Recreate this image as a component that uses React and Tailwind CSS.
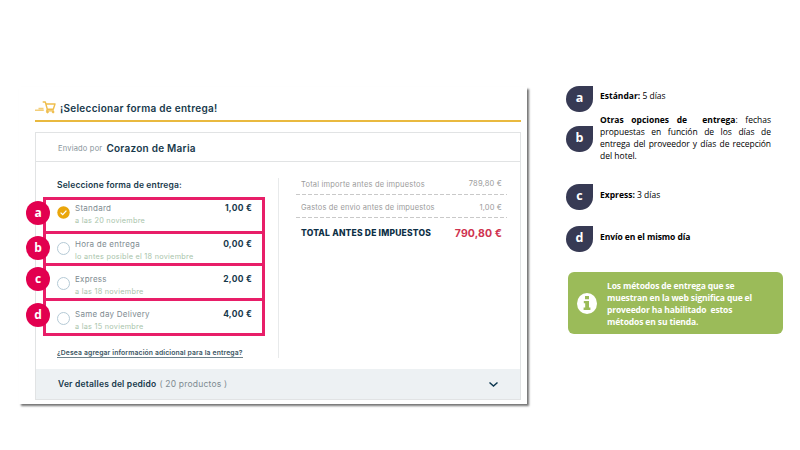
import React from 'react';

const options = [
  { id: 'a', name: 'Standard', date: 'a las 20 noviembre', price: '1,00 €', checked: true, box: 'h-[37px]', pad: 'pt-[4px]', badge: 'top-[1px]' },
  { id: 'b', name: 'Hora de entrega', date: 'lo antes posible el 18 noviembre', price: '0,00 €', box: 'h-[35px]', pad: 'pt-[6px]', badge: 'top-[2px]' },
  { id: 'c', name: 'Express', date: 'a las 18 noviembre', price: '2,00 €', box: 'h-[38px]', pad: 'pt-[9px]', badge: 'top-[1px]' },
  { id: 'd', name: 'Same day Delivery', date: 'a las 15 noviembre', price: '4,00 €', box: 'h-[38px]', pad: 'pt-[9px]', badge: 'top-[2px]' },
];

const CartIcon = () => (
  <svg width="22" height="13" viewBox="0 0 22 13" fill="none" stroke="#efbd4b">
    <path d="M3.5 7.6H8.5M0 9.3H8.8" strokeWidth="1.5" opacity=".75" />
    <path d="M8.2 1H10.3L12.3 8.2H18.3L20 3H11" strokeWidth="1.4" strokeLinejoin="round" strokeLinecap="round" />
    <path d="M12.3 8.2L11.6 9.9H18.8" strokeWidth="1.1" />
    <circle cx="12.5" cy="11" r=".9" fill="#efbd4b" />
    <circle cx="18.1" cy="11" r=".9" fill="#efbd4b" />
  </svg>
);

const Radio = ({ checked }) =>
  checked ? (
    <svg width="13" height="13" viewBox="0 0 13 13" className="shrink-0">
      <circle cx="6.5" cy="6.5" r="6.2" fill="#eaa60b" />
      <path d="M3.6 6.6L5.7 8.6L9.4 4.6" fill="none" stroke="#fff" strokeWidth="1.3" />
    </svg>
  ) : (
    <span className="w-[13px] h-[13px] shrink-0 rounded-full border border-[#b5cad6]" />
  );

const Option = ({ option }) => (
  <div className={`relative -mb-[3px] border-3 border-[#e81e68] ${option.box}`}>
    <span className={`absolute -left-[20px] z-10 w-6 h-6 rounded-full bg-[#e2004f] flex items-center justify-center pb-px font-['Open_Sans'] font-bold text-[12px] leading-none text-white ${option.badge}`}>
      {option.id}
    </span>
    <div className={`flex pl-[11px] pr-[10px] ${option.pad}`}>
      <div className="pt-[2px] flex items-start">
        <Radio checked={option.checked} />
      </div>
      <div className="ml-[5px] flex-1 whitespace-nowrap">
        <div className="text-[8px] leading-[9px] tracking-[0.25px] text-[#7e8b91]">{option.name}</div>
        <div className="mt-[3px] text-[7.3px] leading-[10px] tracking-[0.26px] text-[#a9c4ab]">{option.date}</div>
      </div>
      <div className="text-[8.5px] leading-[9px] font-bold text-[#17394b] tracking-[0.25px]">{option.price}</div>
    </div>
  </div>
);

const Drop = ({ children }) => (
  <span className="w-[27px] h-[26px] shrink-0 rounded-full rounded-tr-none bg-[#373a54] flex items-center justify-center pb-px font-['Open_Sans'] font-bold text-[12.5px] leading-none text-white">
    {children}
  </span>
);

const dashes = 'h-px bg-[repeating-linear-gradient(90deg,#c9c9c9_0_4px,transparent_4px_6px)]';

const DeliveryCard = () => (
  <div className="ml-[19px] mt-[87px] w-[508px] h-[317px] shrink-0 pl-4 pr-[6px] bg-white shadow-[2px_2px_2px_rgba(0,0,0,0.55)] font-['Inter',sans-serif]">
    <div className="h-[35px] border-b-2 border-[#e9b93f] flex items-start pt-[14px]">
      <CartIcon />
      <h1 className="ml-[3px] text-[10px] leading-[14px] tracking-[0.28px] font-semibold text-[#17394b] whitespace-nowrap">¡Seleccionar forma de entrega!</h1>
    </div>

    <div className="mt-[10px] h-[268px] border border-[#e1e3e4] flex flex-col">
      <div className="h-[29px] shrink-0 border-b border-[#e1e3e4] flex items-center pl-[22px] pt-[2px] whitespace-nowrap">
        <span className="pt-[2px] text-[7.5px] text-[#87949a] tracking-[0.2px]">Enviado por</span>
        <span className="ml-[4px] text-[10px] tracking-[0.25px] font-semibold text-[#17394b]">Corazon de Maria</span>
      </div>

      <div className="flex-1 min-h-0 flex">
        <div className="w-[229px] pl-[7px] pt-[17px]">
          <h2 className="pl-[14px] text-[8.5px] leading-[12px] tracking-[0.15px] font-semibold text-[#17394b] whitespace-nowrap">Seleccione forma de entrega:</h2>
          <div className="mt-[6px] w-[222px]">
            {options.map((option) => (
              <Option key={option.id} option={option} />
            ))}
          </div>
          <div className="mt-[15px] pl-[14px] flex">
            <a className="border-b border-[#6d828c] text-[6.8px] leading-[9px] tracking-[0.13px] font-semibold text-[#3b5563] whitespace-nowrap">¿Desea agregar información adicional para la entrega?</a>
          </div>
        </div>

        <div className="ml-[13px] mt-[16px] h-[180px] w-px bg-[#e8eaeb]" />

        <div className="ml-[17px] mt-[14px] w-[211px] whitespace-nowrap">
          <div className="h-[18px] px-[5px] flex items-center justify-between text-[7.5px] tracking-[0.19px] text-[#9b9b9b]">
            <span>Total importe antes de impuestos</span>
            <span className="pb-[2px]">789,80 €</span>
          </div>
          <div className={dashes} />
          <div className="h-[22px] px-[5px] pt-[3px] flex items-center justify-between text-[7.5px] tracking-[0.16px] text-[#9b9b9b]">
            <span>Gastos de envio antes de impuestos</span>
            <span>1,00 €</span>
          </div>
          <div className={dashes} />
          <div className="h-[31px] px-[5px] flex items-center justify-between">
            <span className="text-[8.5px] tracking-[0.2px] font-extrabold text-[#0d2f45]">TOTAL ANTES DE IMPUESTOS</span>
            <span className="text-[10.5px] tracking-[0.1px] font-bold text-[#cf3350]">790,80 €</span>
          </div>
        </div>
      </div>

      <div className="h-[30px] shrink-0 bg-[#edf1f3] flex items-center pl-[22px] pr-[21px] text-[8.5px] tracking-[0.2px] text-[#7e8b91] whitespace-nowrap">
        <span className="font-semibold text-[#17394b]">Ver detalles del pedido</span>
        <span className="ml-[3px]">( 20 productos )</span>
        <svg className="ml-auto" width="11" height="7" viewBox="0 0 11 7" fill="none">
          <path d="M1.5 1.5L5.5 5L9.5 1.5" stroke="#0d3850" strokeWidth="1.5" />
        </svg>
      </div>
    </div>
  </div>
);

const Legend = () => (
  <div className="ml-[39px] mt-[86px] w-[218px] font-['Open_Sans',sans-serif] text-[8.5px] leading-[12px] text-black">
    <div className="flex">
      <Drop>a</Drop>
      <p className="ml-[7px] mt-[4px] whitespace-nowrap"><b>Estándar:</b> 5 días</p>
    </div>
    <div className="flex mt-[2px]">
      <div className="pt-[12px]"><Drop>b</Drop></div>
      <div className="ml-[7px] w-[171px] [text-align-last:justify] whitespace-nowrap">
        <p><b>Otras opciones de &nbsp;entrega</b>: fechas</p>
        <p>propuestas en función de los días de</p>
        <p className="tracking-[-0.05px]">entrega del proveedor y días de recepción</p>
        <p className="[text-align-last:left]">del hotel.</p>
      </div>
    </div>
    <div className="flex mt-[22px]">
      <Drop>c</Drop>
      <p className="ml-[7px] mt-[5px] whitespace-nowrap"><b>Express:</b> 3 días</p>
    </div>
    <div className="flex mt-[16px]">
      <Drop>d</Drop>
      <p className="ml-[7px] mt-[5px] font-bold tracking-[-0.08px] whitespace-nowrap">Envío en el mismo día</p>
    </div>

    <div className="ml-[2px] mt-[20px] w-[215px] h-[62px] rounded-md bg-[#9bbb59] flex items-center pl-[9px] text-white">
      <svg width="20" height="21" viewBox="0 0 20 21">
        <ellipse cx="10" cy="10.5" rx="10" ry="10.5" fill="#fff" />
        <path d="M8 3H12V6.3H8ZM6.8 8H12V14.6H13.4V17H6.6V14.6H8.2V10.3H6.8Z" fill="#9bbb59" />
      </svg>
      <div className="ml-[10px] pt-[2px] font-bold tracking-[-0.13px] whitespace-nowrap">
        <p>Los métodos de entrega que se</p>
        <p>muestran en la web significa que el</p>
        <p>proveedor ha habilitado &nbsp;estos</p>
        <p>métodos en su tienda.</p>
      </div>
    </div>
  </div>
);

const App = () => (
  <main className="w-[800px] h-[450px] bg-white flex items-start overflow-hidden">
    <DeliveryCard />
    <Legend />
  </main>
);

export default App;
